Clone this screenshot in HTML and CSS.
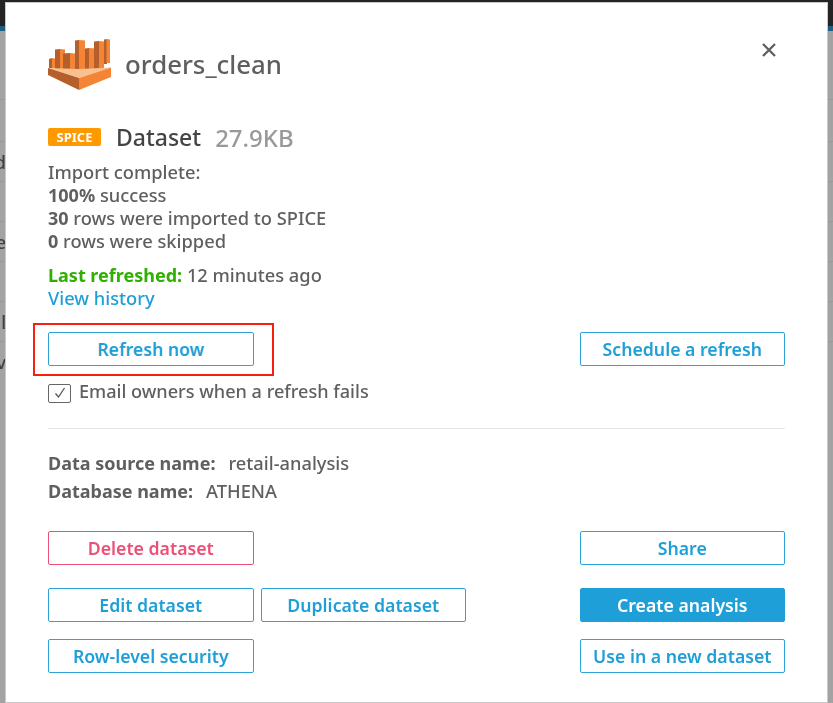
FILE: index.html
```html
<!DOCTYPE html>
<html lang="en">
<head>
<meta charset="utf-8">
<title>orders_clean</title>
<link rel="stylesheet" href="styles.css">
</head>
<body>
<div class="topbar"></div>
<div class="rows">
  <div class="bgrow"></div>
  <div class="bgrow"><span class="cell">d</span></div>
  <div class="bgrow"></div>
  <div class="bgrow"><span class="cell">e</span></div>
  <div class="bgrow"></div>
  <div class="bgrow"><span class="cell">al</span></div>
  <div class="bgrow open"><span class="cell">v</span></div>
</div>
<main class="modal">
  <header class="head">
    <div class="title">
      <svg class="logo" width="63" height="52" viewBox="0 0 63 52">
        <path fill="#b5602b" d="M1 21l3-1v10H1z"/>
        <path fill="#f58536" d="M4 20l3 .5V30H4z"/>
        <path fill="#b5602b" d="M7 11.500l5-.5v20H7z"/>
        <path fill="#f58536" d="M12 11l5 .5V31h-5z"/>
        <path fill="#b5602b" d="M15 15.500l7-.5v16h-7z"/>
        <path fill="#f58536" d="M22 15l5 .5V31h-5z"/>
        <path fill="#b5602b" d="M27 2.500l4-.5v29h-4z"/>
        <path fill="#f58536" d="M31 2l6 .5V31h-6z"/>
        <path fill="#b5602b" d="M37 10.500l4-.5v21h-4z"/>
        <path fill="#f58536" d="M41 10l7 .5V31h-7z"/>
        <path fill="#b5602b" d="M46 3.500l5-.5v28h-5z"/>
        <path fill="#f58536" d="M51 3l5 .5V30h-5z"/>
        <path fill="#b5602b" d="M56 1.500l3-.5v25h-3z"/>
        <path fill="#f58536" d="M58.500 1l3.500.5V25h-3.500z"/>
        <path fill="#fbc08f" d="M0 30l31 1 32-1.500-32 10.500z"/>
        <path fill="#b5602b" d="M0 30l31 10v12L0 37z"/>
        <path fill="#f58536" d="M63 29.500L31 40v12l32-13z"/>
      </svg>
      <h1 class="name">orders_clean</h1>
    </div>
    <svg class="close" width="14" height="14" viewBox="0 0 14 14"><path d="M1 1l12 12M13 1L1 13" stroke="#5f5f5f" stroke-width="2.3" fill="none"/></svg>
  </header>

  <div class="kind">
    <span class="badge">SPICE</span>
    <span class="dataset">Dataset</span>
    <span class="size">27.9KB</span>
  </div>

  <div class="status">
    <p>Import complete:</p>
    <p><b>100%</b> success</p>
    <p><b>30</b> rows were imported to SPICE</p>
    <p><b>0</b> rows were skipped</p>
  </div>

  <div class="refresh">
    <p><b class="green">Last refreshed:</b> 12 minutes ago</p>
    <a class="link">View history</a>
  </div>

  <div class="row first">
    <div class="highlight"><button class="btn">Refresh now</button></div>
    <button class="btn">Schedule a refresh</button>
  </div>

  <label class="check">
    <span class="box"><svg width="14" height="14" viewBox="0 0 14 14"><path d="M2.500 7.500l3 3.500 6-9" stroke="#555" stroke-width="1.3" fill="none"/></svg></span>
    <span class="checktext">Email owners when a refresh fails</span>
  </label>

  <hr class="rule">

  <p class="meta"><b>Data source name:</b><span>retail-analysis</span></p>
  <p class="meta second"><b>Database name:</b><span>ATHENA</span></p>

  <div class="row del">
    <button class="btn danger">Delete dataset</button>
    <button class="btn">Share</button>
  </div>
  <div class="row mid">
    <div class="pair">
      <button class="btn">Edit dataset</button>
      <button class="btn">Duplicate dataset</button>
    </div>
    <button class="btn primary">Create analysis</button>
  </div>
  <div class="row last">
    <button class="btn">Row-level security</button>
    <button class="btn">Use in a new dataset</button>
  </div>
</main>
</body>
</html>
```
FILE: styles.css
```css
* { box-sizing: border-box; }
html, body { margin: 0; height: 100%; overflow: hidden; }
body {
  position: relative;
  width: 833px;
  height: 703px;
  background: #a3a3a3;
  font-family: "Noto Sans", "Open Sans", sans-serif;
  font-size: 18.300px;
  font-weight: 500;
  color: #5f5f5f;
  filter: blur(0.35px);
}
.topbar { height: 31px; background: #242424; border-bottom: 5px solid #1e5f7f; }
.rows { padding-top: 68px; }
.bgrow { height: 40px; border-top: 1px solid #989898; color: #3f3f3f; font-size: 18px; line-height: 40px; }
.bgrow:first-child { height: 42px; }
.cell { display: flex; justify-content: flex-end; width: 6px; overflow: hidden; white-space: nowrap; }

.modal {
  position: absolute;
  left: 6px; top: 3px;
  width: 821px;
  height: 699px;
  background: #fff;
  box-shadow: 0 0 0 1px #c9c9c9;
  padding: 35px 42px 0;
}
.head { display: flex; justify-content: space-between; align-items: flex-start; }
.title { display: flex; align-items: center; gap: 14px; }
.logo { display: block; }
.name { margin: 0; font-size: 25.800px; font-weight: 500; color: #5f5f5f; line-height: 52px; }
.close { margin-top: 5px; margin-right: 9px; }

.kind { display: flex; align-items: center; margin-top: 33px; height: 28px; }
.badge { width: 53px; height: 18px; background: #ff9900; border-radius: 2px; color: #fff; font-size: 13px; font-weight: 700; line-height: 18px; text-align: center; }
.dataset { margin-left: 15px; font-size: 23px; font-weight: 500; color: #444; }
.size { margin-left: 14px; font-size: 24px; font-weight: 500; color: #999; }

p { margin: 0; }
b { font-size: 18px; font-weight: 700; line-height: 1; }
.status { margin-top: 9px; line-height: 23px; }
.refresh { margin-top: 11px; line-height: 23px; }
.green { color: #2fb000; }
.link { color: #1f9fd8; font-weight: 500; display: block; }

.row { display: flex; justify-content: space-between; }
.btn {
  width: 205.500px;
  height: 34px;
  padding: 0;
  background: #fff;
  border: 1px solid #2ea3da;
  border-radius: 2px;
  color: #1f9fd8;
  font: 600 17.700px "Noto Sans", "Open Sans", sans-serif;
}
.danger { border-color: #ec4f77; color: #ec4f77; }
.primary { background: #1f9fd8; border-color: #1f9fd8; color: #fff; }
.first { margin-top: 23px; }
.highlight { position: relative; }
.highlight::after { content: ""; position: absolute; left: -15px; top: -9px; width: 237px; height: 49px; border: 2px solid #f5200d; pointer-events: none; }
.check { display: flex; align-items: center; gap: 8px; margin-top: 15px; height: 24px; }
.checktext { position: relative; top: -2px; font-size: 18.100px; }
.box { width: 23px; height: 19px; border: 1.500px solid #666; border-radius: 2px; display: flex; align-items: center; justify-content: center; }
.rule { margin: 23px 0 0; border: 0; border-top: 1px solid #e5e5e5; }
.meta { margin-top: 22px; line-height: 24px; display: flex; align-items: baseline; gap: 13px; }
.second { margin-top: 4px; }
.del { margin-top: 28px; }
.mid { margin-top: 23px; }
.last { margin-top: 17px; }
.pair { display: flex; gap: 7px; }
```
